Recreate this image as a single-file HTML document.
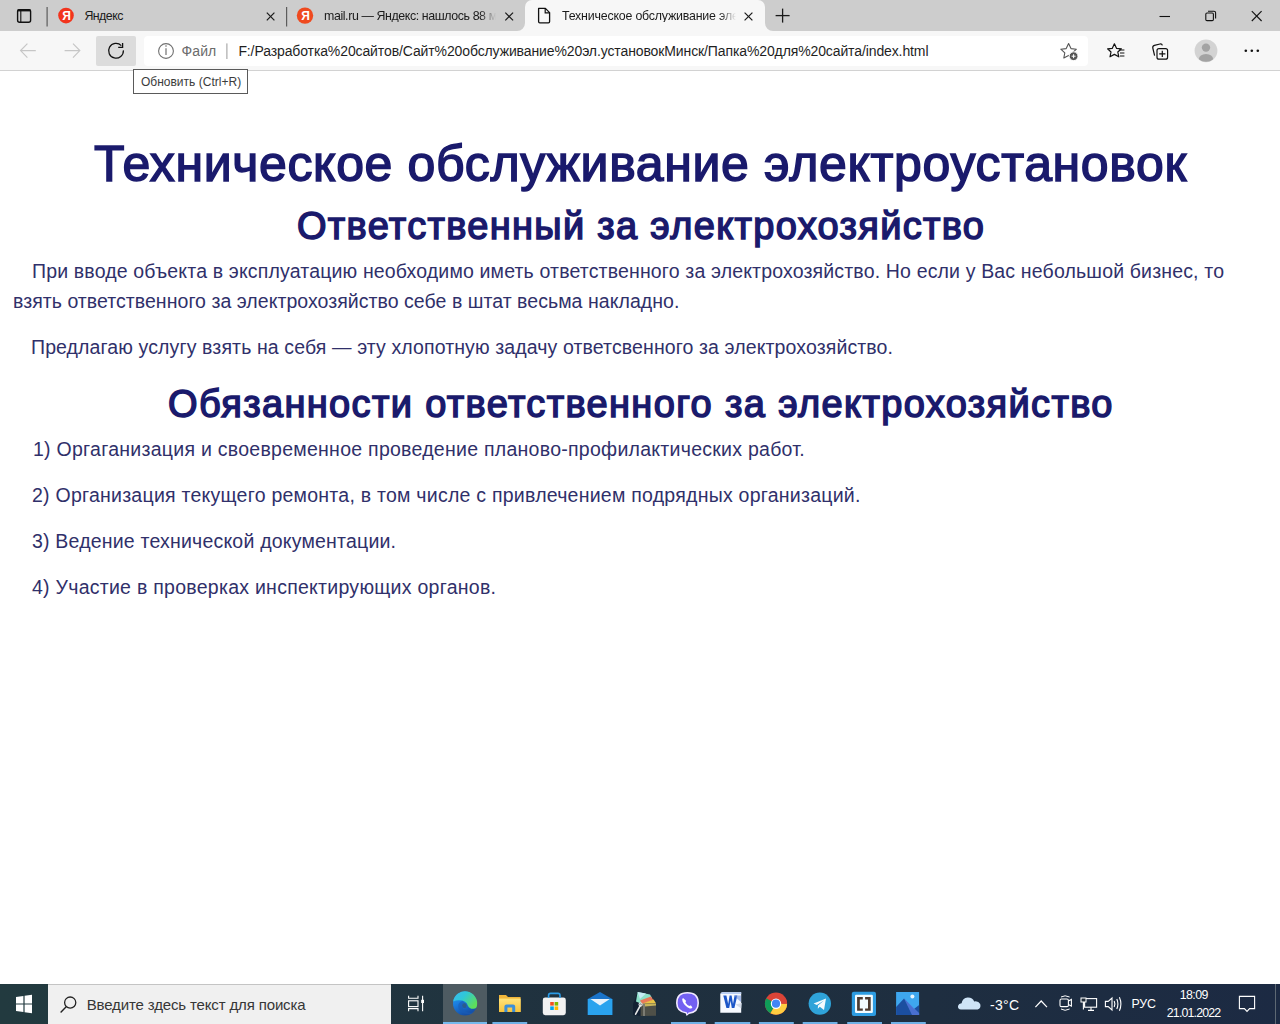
<!DOCTYPE html>
<html><head><meta charset="utf-8">
<style>
*{margin:0;padding:0;box-sizing:border-box}
html,body{width:1280px;height:1024px;overflow:hidden;background:#fff}
body{position:relative;font-family:"Liberation Sans",sans-serif}
.a{position:absolute}
.t{position:absolute;white-space:nowrap;line-height:1}
#tabs{left:0;top:0;width:1280px;height:31px;background:#cdcdcd}
#tool{left:0;top:31px;width:1280px;height:39px;background:#f7f7f7}
#tline{left:0;top:70px;width:1280px;height:1px;background:#d2d2d2}
#task{left:0;top:984px;width:1280px;height:40px;background:linear-gradient(to right,#223a3f 0px,#213640 300px,#1f303e 640px,#1e2e40 930px,#1c2a43 1280px)}
.h{color:#1a1a6c;-webkit-text-stroke:1.5px #1a1a6c}
.p{color:#30306a}
</style></head><body>

<!-- TAB STRIP -->
<div id="tabs" class="a"></div>
<svg class="a" style="left:0;top:0" width="1280" height="31">
  <!-- tab actions icon -->
  <rect x="17.6" y="9.6" width="13" height="12.6" rx="2" fill="none" stroke="#111" stroke-width="1.4"/>
  <rect x="17.6" y="9.2" width="13" height="2.2" fill="#111"/>
  <line x1="20.8" y1="11" x2="20.8" y2="22" stroke="#111" stroke-width="1.1"/>
  <!-- separators -->
  <rect x="46.5" y="7" width="1.2" height="19.5" fill="#5c5c5c"/>
  <rect x="286" y="7" width="1.2" height="19.5" fill="#5c5c5c"/>
  <!-- yandex favicons -->
  <circle cx="66" cy="15.6" r="7.8" fill="#f2341d"/>
  <circle cx="305" cy="15.6" r="8.2" fill="#ef4a1f"/>
  <!-- close x's -->
  <g stroke="#1a1a1a" stroke-width="1.2">
    <line x1="266.8" y1="12.6" x2="274.4" y2="20.4"/><line x1="274.4" y1="12.6" x2="266.8" y2="20.4"/>
    <line x1="505.3" y1="12.6" x2="513.1" y2="20.4"/><line x1="513.1" y1="12.6" x2="505.3" y2="20.4"/>
  </g>
</svg>
<div class="t" style="left:62.3px;top:9.6px;font-size:12px;font-weight:bold;color:#fff;">Я</div>
<div class="t" style="left:301.3px;top:9.6px;font-size:12px;font-weight:bold;color:#fff;">Я</div>
<div class="t" id="tab1t" style="letter-spacing:-0.540px;left:84.40px;top:10px;font-size:12.4px;color:#1b1b1b">Яндекс</div>
<div class="t" id="tab2t" style="letter-spacing:-0.4px;left:324px;top:10px;font-size:12.4px;color:#1b1b1b;width:172px;overflow:hidden;-webkit-mask-image:linear-gradient(to right,#000 156px,transparent 172px)">mail.ru — Яндекс: нашлось 88 млн результатов</div>
<!-- active tab -->
<div class="a" style="left:525px;top:0;width:240px;height:32px;background:#f7f7f7;border-radius:7px 7px 0 0"></div>
<svg class="a" style="left:517px;top:23px" width="8" height="8"><path d="M8 0 A8 8 0 0 1 0 8 L8 8 Z" fill="#f7f7f7"/></svg>
<svg class="a" style="left:765px;top:23px" width="8" height="8"><path d="M0 0 A8 8 0 0 0 8 8 L0 8 Z" fill="#f7f7f7"/></svg>
<svg class="a" style="left:525px;top:0" width="280" height="31">
  <path d="M13.6 8.4 H20.4 L24.6 12.6 V21.6 Q24.6 22.8 23.4 22.8 H14.8 Q13.6 22.8 13.6 21.6 Z" fill="none" stroke="#111" stroke-width="1.3" stroke-linejoin="round"/>
  <path d="M20.2 8.6 V12.8 H24.4" fill="none" stroke="#111" stroke-width="1.2"/>
  <g stroke="#1a1a1a" stroke-width="1.2">
    <line x1="219.6" y1="12.6" x2="227.4" y2="20.4"/><line x1="227.4" y1="12.6" x2="219.6" y2="20.4"/>
  </g>
  <g stroke="#1a1a1a" stroke-width="1.3">
    <line x1="250.6" y1="15.6" x2="264.6" y2="15.6"/><line x1="257.6" y1="8.6" x2="257.6" y2="22.6"/>
  </g>
</svg>
<div class="t" id="tab3t" style="letter-spacing:-0.2px;left:562px;top:10px;font-size:12.4px;color:#1b1b1b;width:174px;overflow:hidden;-webkit-mask-image:linear-gradient(to right,#000 158px,transparent 174px)">Техническое обслуживание электроустановок</div>
<!-- window controls -->
<svg class="a" style="left:1140px;top:0" width="140" height="31">
  <line x1="1159.5" y1="16.5" x2="1170" y2="16.5" stroke="#111" stroke-width="1.1" transform="translate(-1140,0)"/>
  <rect x="65.8" y="13" width="7.6" height="7.6" rx="1.2" fill="none" stroke="#111" stroke-width="1.1"/>
  <path d="M68 11.2 H74 Q75.6 11.2 75.6 12.8 V18.6" fill="none" stroke="#111" stroke-width="1.1"/>
  <g stroke="#111" stroke-width="1.1"><line x1="111.8" y1="11.2" x2="121.6" y2="21"/><line x1="121.6" y1="11.2" x2="111.8" y2="21"/></g>
</svg>

<!-- TOOLBAR -->
<div id="tool" class="a"></div>
<div id="tline" class="a"></div>
<div class="a" style="left:96px;top:36px;width:40px;height:30px;background:#dcdcdc;border-radius:2px"></div>
<div class="a" style="left:144px;top:36px;width:944px;height:29.5px;background:#fff;border-radius:4px"></div>
<svg class="a" style="left:0;top:31px" width="1280" height="39">
  <g fill="none" stroke="#c6c6c6" stroke-width="1.2">
    <path d="M20.6 19.6 H35.8 M27.4 12.6 L20.6 19.6 L27.4 26.6"/>
    <path d="M64.6 19.6 H79.8 M73 12.6 L79.8 19.6 L73 26.6"/>
  </g>
  <path d="M121.3 14.6 A7.4 7.4 0 1 0 123.4 19.4" fill="none" stroke="#111" stroke-width="1.25"/>
  <path d="M118.2 16.4 H122.6 V12" fill="none" stroke="#111" stroke-width="1.3"/>
  <circle cx="166" cy="20" r="7.4" fill="none" stroke="#707070" stroke-width="1.1"/>
  <line x1="166" y1="17.2" x2="166" y2="24" stroke="#707070" stroke-width="1.2"/>
  <circle cx="166" cy="15" r="0.8" fill="#707070"/>
  <rect x="226.4" y="12.4" width="1" height="15.6" fill="#9a9a9a"/>
  <!-- star add -->
  <path d="M1068.6 12.6 L1071 17.6 L1076.4 18.2 L1072.4 21.8 L1073.4 27 L1068.6 24.4 L1063.8 27 L1064.8 21.8 L1060.8 18.2 L1066.2 17.6 Z" fill="none" stroke="#555" stroke-width="1.1" stroke-linejoin="round"/>
  <circle cx="1073.6" cy="25.2" r="4.4" fill="#555" stroke="#fff" stroke-width="1"/>
  <path d="M1073.6 23.2 V27.2 M1071.6 25.2 H1075.6" stroke="#fff" stroke-width="1"/>
  <!-- favorites -->
  <path d="M1114.4 12.8 L1116.6 17.4 L1121.4 17.8 L1117.8 21 L1118.8 25.8 L1114.4 23.4 L1110 25.8 L1111 21 L1107.6 17.8 L1112.2 17.4 Z" fill="none" stroke="#111" stroke-width="1.2" stroke-linejoin="round"/>
  <path d="M1119 19 H1124.4 M1120 22 H1124.4 M1120 25 H1124.4" stroke="#111" stroke-width="1.1"/>
  <!-- collections -->
  <path d="M1154.6 24.6 L1152.8 17 Q1152.4 15 1154.4 14.4 L1160 13 Q1161.8 12.6 1162.4 14.4" fill="none" stroke="#111" stroke-width="1.2"/>
  <rect x="1157" y="17.6" width="10.6" height="10.6" rx="2" fill="#f7f7f7" stroke="#111" stroke-width="1.2"/>
  <path d="M1162.3 19.8 V26 M1159.2 22.9 H1165.4" stroke="#111" stroke-width="1.2"/>
  <!-- profile -->
  <circle cx="1206" cy="19.8" r="11.4" fill="#d3d3d3"/>
  <circle cx="1206" cy="16.6" r="4.2" fill="#a3a3a3"/>
  <path d="M1198.8 28.2 Q1199.4 23.2 1206 23 Q1212.6 23.2 1213.2 28.2 Q1210.4 30.8 1206 30.8 Q1201.6 30.8 1198.8 28.2 Z" fill="#a3a3a3"/>
  <!-- menu -->
  <circle cx="1245.8" cy="19.8" r="1.3" fill="#111"/><circle cx="1251.8" cy="19.8" r="1.3" fill="#111"/><circle cx="1257.8" cy="19.8" r="1.3" fill="#111"/>
</svg>
<div class="t" id="fl" style="left:181.5px;top:44.3px;font-size:14px;color:#6b6b6b;letter-spacing:0.1px">Файл</div>
<div class="t" id="url" style="left:238.40px;top:44.3px;font-size:14px;letter-spacing:-0.113px;color:#1f1f1f">F:/Разработка%20сайтов/Сайт%20обслуживание%20эл.установокМинск/Папка%20для%20сайта/index.html</div>
<!-- tooltip -->
<div class="a" style="left:133px;top:69px;width:115px;height:25px;background:#fff;border:1px solid #5a5a5a"></div>
<div class="t" id="tip" style="left:140.90px;top:76px;font-size:12px;color:#3c3c3c;letter-spacing:0.019px">Обновить (Ctrl+R)</div>

<!-- content -->
<div class="t h" id="h1" style="left:94px;top:139.0px;font-size:50px;letter-spacing:0.650px">Техническое обслуживание электроустановок</div>
<div class="t h" id="h2a" style="left:297px;top:207.08px;font-size:38px;letter-spacing:1.312px">Ответственный за электрохозяйство</div>
<div class="t p" id="p1a" style="left:32px;top:261.62px;font-size:19.5px;letter-spacing:0.160px">При вводе объекта в эксплуатацию необходимо иметь ответственного за электрохозяйство. Но если у Вас небольшой бизнес, то</div>
<div class="t p" id="p1b" style="left:13px;top:291.62px;font-size:19.5px;letter-spacing:0.044px">взять ответственного за электрохозяйство себе в штат весьма накладно.</div>
<div class="t p" id="p2" style="left:31px;top:337.62px;font-size:19.5px;letter-spacing:0.115px">Предлагаю услугу взять на себя — эту хлопотную задачу ответсвенного за электрохозяйство.</div>
<div class="t h" id="h2b" style="left:168px;top:385.08px;font-size:38px;letter-spacing:1.356px">Обязанности ответственного за электрохозяйство</div>
<div class="t p" id="li1" style="left:33px;top:439.62px;font-size:19.5px;letter-spacing:0.270px">1) Оргаганизация и своевременное проведение планово-профилактических работ.</div>
<div class="t p" id="li2" style="left:32px;top:485.62px;font-size:19.5px;letter-spacing:0.247px">2) Организация текущего ремонта, в том числе с привлечением подрядных организаций.</div>
<div class="t p" id="li3" style="left:32px;top:531.62px;font-size:19.5px;letter-spacing:0.200px">3) Ведение технической документации.</div>
<div class="t p" id="li4" style="left:32px;top:577.62px;font-size:19.5px;letter-spacing:0.267px">4) Участие в проверках инспектирующих органов.</div>

<div id="task" class="a"></div>
<div class="a" style="left:48px;top:984px;width:343px;height:40px;background:#f0f0f0;border-top:1px solid #c4c4c4"></div>
<div class="a" style="left:443px;top:984px;width:44px;height:40px;background:#4e5b62"></div>
<svg class="a" style="left:0;top:984px" width="1280" height="40">
  <!-- windows logo -->
  <path d="M16 13 L23.4 12 V19.4 H16 Z M24.6 11.8 L32 10.8 V19.4 H24.6 Z M16 20.6 H23.4 V28 L16 27 Z M24.6 20.6 H32 V29.2 L24.6 28.2 Z" fill="#fff"/>
  <!-- search magnifier -->
  <circle cx="70.2" cy="18.6" r="5.6" fill="none" stroke="#222" stroke-width="1.3"/>
  <line x1="66.2" y1="22.8" x2="60.6" y2="28.4" stroke="#222" stroke-width="1.4"/>
  <!-- task view -->
  <g fill="none" stroke="#fff" stroke-width="1.1">
    <path d="M408.6 11.8 V14.2 H418 V11.8"/>
    <rect x="408.6" y="16.8" width="9.4" height="5.8"/>
    <path d="M408.6 27.2 V24.6 H418 V27.2"/>
    <path d="M422.6 11.8 V27.2"/>
  </g>
  <rect x="421.2" y="15.8" width="2.8" height="3.2" fill="#fff"/>
  <!-- underlines -->
  <g fill="#76b9ed">
    <rect x="443" y="38" width="44" height="2"/>
    <rect x="492.4" y="38" width="34.8" height="2" fill="#6fb1e6"/>
    <rect x="671" y="38" width="34.8" height="2" fill="#6fb1e6"/>
    <rect x="714.7" y="38" width="35.6" height="2" fill="#6fb1e6"/>
    <rect x="758.9" y="38" width="34.9" height="2" fill="#6fb1e6"/>
    <rect x="802.7" y="38" width="34.8" height="2" fill="#6fb1e6"/>
    <rect x="847.2" y="38" width="34.8" height="2" fill="#6fb1e6"/>
    <rect x="891" y="38" width="34.8" height="2" fill="#6fb1e6"/>
  </g>
  <!-- edge -->
  <defs>
    <linearGradient id="eg1" x1="0" y1="0" x2="1" y2="0.6"><stop offset="0" stop-color="#3bb8f0"/><stop offset="0.45" stop-color="#2fc7d8"/><stop offset="1" stop-color="#5ede5a"/></linearGradient>
    <linearGradient id="eg2" x1="0" y1="0" x2="0.4" y2="1"><stop offset="0" stop-color="#2ca4f0"/><stop offset="0.5" stop-color="#1a7de0"/><stop offset="1" stop-color="#1550a8"/></linearGradient>
    <linearGradient id="fold" x1="0" y1="0" x2="0" y2="1"><stop offset="0" stop-color="#ffe37a"/><stop offset="1" stop-color="#f6c33d"/></linearGradient>
  </defs>
  <circle cx="465" cy="19.6" r="12" fill="url(#eg2)"/>
  <path d="M453.2 17.4 A12 12 0 0 1 477 21.4 Q476.6 24.6 473.6 24.8 Q469.4 25 467.8 21.4 Q466.4 17.6 462.2 16.6 Q457 15.8 453.2 17.4 Z" fill="url(#eg1)"/>
  <path d="M462.6 17 Q458 18 458.2 22.6 Q458.8 28.6 466 30 Q471.4 30.6 475.6 27.4 Q472 29.4 467.6 28.2 Q462.2 26.4 462.4 21.6 Q462.6 19.4 464.6 18.4 Z" fill="#1a5bb5" opacity="0.6"/>
  <ellipse cx="464.4" cy="21.4" rx="2.2" ry="2.5" fill="#2f587e" opacity="0.8"/>
  <!-- explorer folder -->
  <path d="M499 11 H506 L508 13 H520.6 V28 H499 Z" fill="#f0b63b"/>
  <rect x="499" y="14.6" width="21.6" height="13.4" fill="url(#fold)"/>
  <path d="M504.4 28 V22.6 Q504.4 20.4 506.6 20.4 H513 Q515.2 20.4 515.2 22.6 V28 H512.2 V23.4 H507.4 V28 Z" fill="#3b8fd9"/>
  <!-- store -->
  <rect x="542.8" y="13.6" width="23" height="17.6" rx="2.4" fill="#f2f2f2"/>
  <path d="M548.6 14 V11.4 Q548.6 9.4 550.6 9.4 H558 Q560 9.4 560 11.4 V14" fill="none" stroke="#2b9be6" stroke-width="1.6"/>
  <rect x="550.2" y="18" width="3.6" height="3.6" fill="#f25022"/><rect x="554.6" y="18" width="3.6" height="3.6" fill="#7fba00"/>
  <rect x="550.2" y="22.4" width="3.6" height="3.6" fill="#00a4ef"/><rect x="554.6" y="22.4" width="3.6" height="3.6" fill="#ffb900"/>
  <!-- mail -->
  <path d="M587.8 15 L600 8 L612.3 15 V31 H587.8 Z" fill="#1a73c9"/>
  <path d="M587.8 15 H612.3 V31 H587.8 Z" fill="#2aa3ee"/>
  <path d="M590.4 15 H609.8 L600 21.6 Z" fill="#e8f2fb"/>
  <!-- winrar -->
  <path d="M633 20 L637.8 8 L641 20 L641 32 L633 31 Z" fill="#0f1d30" opacity="0.8"/>
  <path d="M637.6 8 L650 10.4 L652 14 L640.6 19.6 L636 17.4 Z" fill="#8ee0c8"/>
  <path d="M637.6 8 L646 9.6 L640 15 Z" fill="#c6ecf5"/>
  <path d="M640 16.4 L651 12.6 L653.4 16 L642.4 20.4 Z" fill="#e9795a"/>
  <path d="M642.4 19.6 L653.6 15.4 L656 19.2 L644.6 22.4 Z" fill="#e8c446"/>
  <path d="M640.6 19.8 L656 19.2 V31.8 L640.6 32 Z" fill="#4f5048"/>
  <path d="M645 20 L656 19.4 V21.6 L645 22.4 Z" fill="#c7b45a"/>
  <rect x="643.4" y="19.4" width="1.2" height="12.6" fill="#9a9a90"/>
  <line x1="635.6" y1="30.2" x2="640.6" y2="21" stroke="#e6e6e6" stroke-width="1.6" stroke-linecap="round"/>
  <circle cx="640.6" cy="20.6" r="1.6" fill="none" stroke="#e6e6e6" stroke-width="1.1"/>
  <!-- viber -->
  <path d="M687.4 8 Q699 8 699 19 Q699 29 689 30 L686.6 32 L685.8 29.6 Q676 28 676 19 Q676 8 687.4 8 Z" fill="#f2eaff"/>
  <path d="M687.4 9.6 Q697.4 9.6 697.4 19 Q697.4 27.6 688.6 28.4 L687.2 30 L686.8 28.2 Q677.6 27 677.6 19 Q677.6 9.6 687.4 9.6 Z" fill="#7360f2"/>
  <path d="M683 14 Q681.6 14.6 682.6 17.4 Q684.6 22 689.8 24.4 Q691.6 25 692.4 23.6 L691 21.6 Q690 21.2 689.4 22 Q687 21 685.4 18.4 Q686.2 17.6 685.8 16.6 Z" fill="#fff"/>
  <!-- word -->
  <path d="M722.6 8.2 H741.2 V28.7 H720.3 V10.6 Q720.3 8.2 722.6 8.2 Z" fill="#f6f9ff"/>
  <path d="M722.6 8.2 H741.2 V10 H720.6 Q721 8.2 722.6 8.2 Z" fill="#b9cff5"/>
  <path d="M723.3 11.6 H726.4 L728.2 20 L729.6 11.6 H731.6 L733 20 L734.6 11.6 H737.3 L734.4 23.9 H731.8 L730.6 16.8 L729.2 23.9 H726.4 Z" fill="#1c56c8"/>
  <path d="M733.6 11.6 H741 V18 Z" fill="#6f8fd8" opacity="0.6"/>
  <path d="M735.6 20.6 L741.8 19 L741.2 24.4 Z" fill="#d4dbe8"/>
  <!-- chrome -->
  <circle cx="776" cy="19.7" r="11.1" fill="#db4437"/>
  <path d="M776 19.7 L766.4 14.15 A11.1 11.1 0 0 0 770.45 29.3 Z" fill="#0f9d58"/>
  <path d="M776 19.7 L770.45 29.3 A11.1 11.1 0 0 0 787.1 19.7 L776 19.7 Z" fill="#ffcd40"/>
  <path d="M776 19.7 L787.1 19.7 A11.1 11.1 0 0 0 785.6 14.15 Z" fill="#db4437"/>
  <circle cx="776" cy="19.7" r="5.2" fill="#fff"/>
  <circle cx="776" cy="19.7" r="4.1" fill="#4285f4"/>
  <!-- telegram -->
  <circle cx="819.8" cy="19.6" r="11.2" fill="#2fa3d9"/>
  <path d="M813.6 19.4 L826 14.4 L824 26 L819.8 22.8 L817.8 24.8 L818 21.6 L824 16.6 L816.8 21 Z" fill="#f5fafd"/>
  <!-- brackets -->
  <rect x="851.8" y="7.8" width="24.2" height="24.2" rx="2" fill="#2d9ce2"/>
  <rect x="855" y="10.8" width="17.9" height="18.2" rx="1.2" fill="#f2fbff"/>
  <path d="M857.1 13 H862.8 V15.4 H859.8 V24.4 H862.8 V26.8 H857.1 Z" fill="#4b3a31"/>
  <path d="M870.7 13 H865.1 V15.4 H868 V24.4 H865.1 V26.8 H870.7 Z" fill="#4b3a31"/>
  <!-- photos -->
  <rect x="896.1" y="8" width="23" height="23" fill="#3ea7ef"/>
  <path d="M896.1 31 V23 L904 14.6 L914 25 L919.1 21 V31 Z" fill="#1b4fa0"/>
  <path d="M904 14.6 L919.1 29 V31 H912 Z" fill="#5c7fe6" opacity="0.7"/>
  <circle cx="912.4" cy="12.6" r="2" fill="#e8f6ff"/>
  <!-- tray: cloud -->
  <path d="M961 25.6 Q957.6 25.4 958 22 Q958.6 19.4 961.6 19.2 Q962.4 14.2 967.6 13.6 Q972.6 13.4 974.2 17.4 Q978.4 16.6 980.2 20 Q981.4 24.2 977.6 25.6 Z" fill="#cfe4f6"/>
  <!-- caret -->
  <path d="M1035.4 23.2 L1041.2 17 L1047 23.2" fill="none" stroke="#fff" stroke-width="1.2"/>
  <!-- meet now -->
  <rect x="1060" y="15" width="8.4" height="7.6" rx="1.4" fill="none" stroke="#fff" stroke-width="1.1"/>
  <path d="M1068.4 17 L1071.4 15.4 V22.2 L1068.4 20.6" fill="none" stroke="#fff" stroke-width="1.1"/>
  <path d="M1061 13 Q1065 10.6 1069.6 13 M1061 25 Q1065 27.6 1069.6 25" fill="none" stroke="#fff" stroke-width="1"/>
  <!-- network -->
  <rect x="1084.6" y="14.6" width="12" height="8.6" fill="none" stroke="#fff" stroke-width="1.1"/>
  <rect x="1081" y="14" width="5" height="4" fill="#1e2a36" stroke="#fff" stroke-width="1"/>
  <path d="M1083.4 18 V25.6 M1088 26.4 H1094 M1091 23.2 V26.4" stroke="#fff" stroke-width="1.1"/>
  <!-- volume -->
  <path d="M1105.4 17.4 H1108.2 L1112 14 V26 L1108.2 22.6 H1105.4 Z" fill="none" stroke="#fff" stroke-width="1.1"/>
  <path d="M1114.2 17 Q1115.6 20 1114.2 23 M1116.8 15 Q1119 20 1116.8 25 M1119.4 13.2 Q1122.4 20 1119.4 26.8" fill="none" stroke="#fff" stroke-width="1.1"/>
  <!-- notification -->
  <path d="M1239.4 12.4 H1254.6 V24.6 H1249.6 L1247 27.4 L1244.4 24.6 H1239.4 Z" fill="none" stroke="#fff" stroke-width="1.1"/>
  <rect x="1275" y="0" width="1" height="40" fill="#5d6873"/>
</svg>
<div class="t" id="srch" style="left:86.70px;top:997px;font-size:15px;letter-spacing:-0.141px;color:#363636">Введите здесь текст для поиска</div>
<div class="t" id="temp" style="left:990.00px;top:998px;font-size:14px;color:#fff;letter-spacing:0.333px">-3°C</div>
<div class="t" id="lang" style="left:1131.40px;top:997.5px;font-size:12.4px;letter-spacing:-0.150px;color:#fff">РУС</div>
<div class="t" id="time" style="left:1179.70px;top:988.5px;font-size:12.4px;letter-spacing:-0.550px;color:#fff">18:09</div>
<div class="t" id="date" style="left:1166.80px;top:1007px;font-size:12.4px;letter-spacing:-0.839px;color:#fff">21.01.2022</div>
</body></html>
